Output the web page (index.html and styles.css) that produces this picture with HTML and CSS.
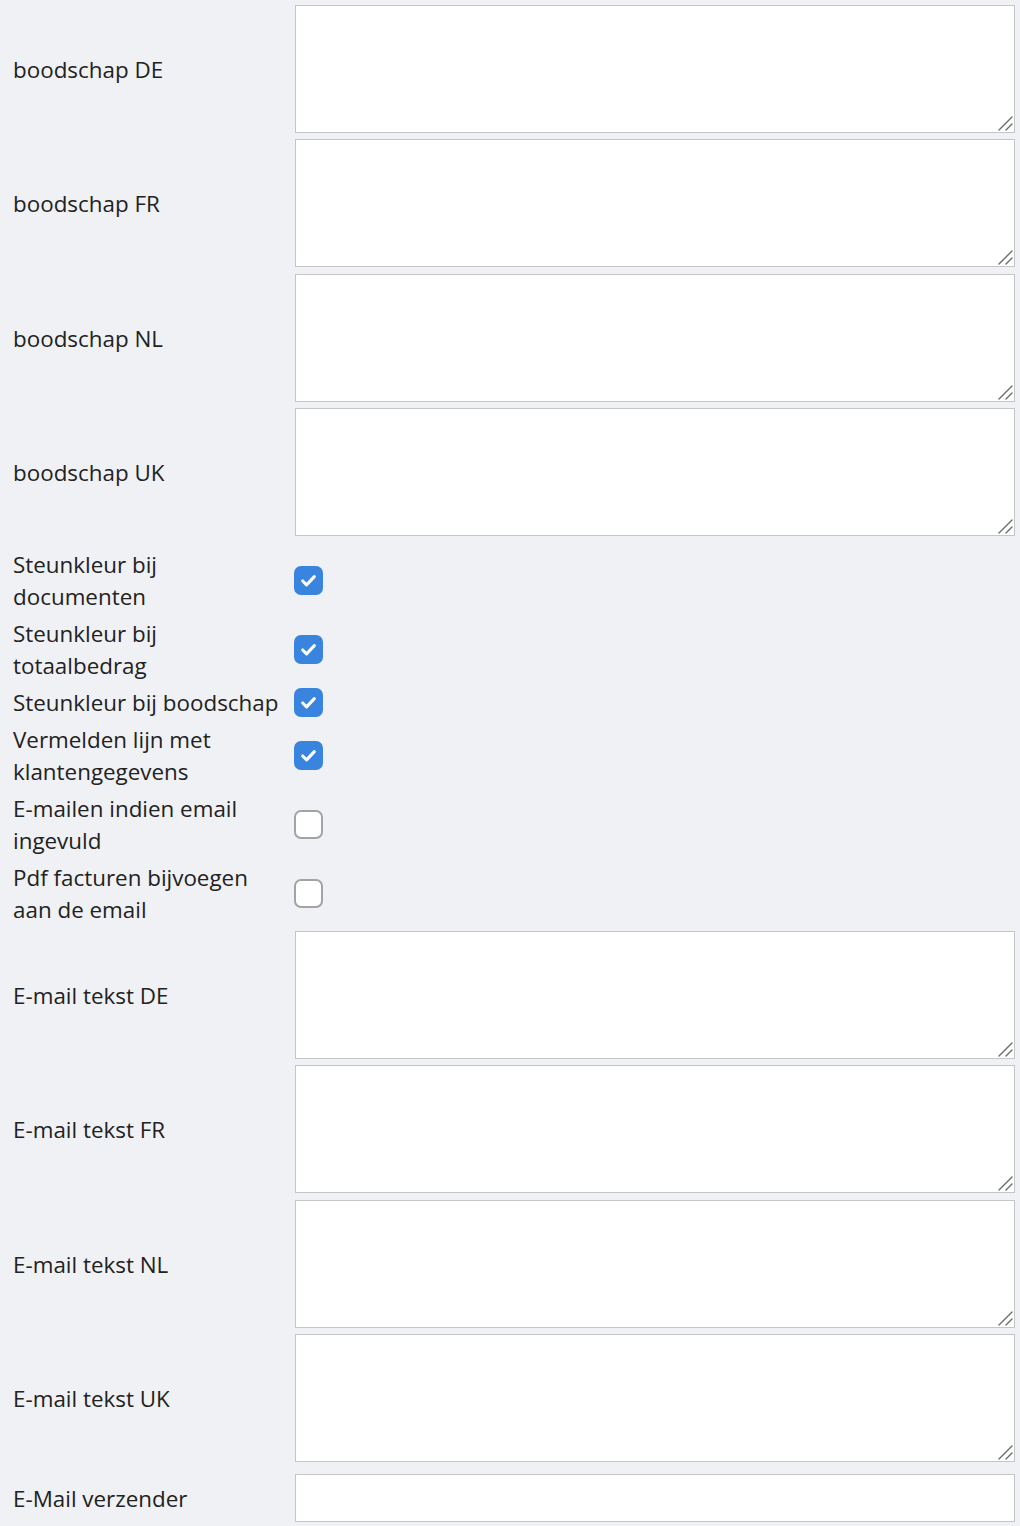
FILE: index.html
```html
<!DOCTYPE html>
<html lang="nl">
<head>
<meta charset="utf-8">
<title>Instellingen</title>
<link rel="stylesheet" href="styles.css">
</head>
<body>
<form class="form">
  <div class="row row-text"><label class="lbl">boodschap DE</label><span class="tw"><textarea class="ta"></textarea><svg class="grip" viewBox="0 0 16 16"><path d="M2 15L15 2M9 15L15 9"/></svg></span></div>
  <div class="row row-text"><label class="lbl">boodschap FR</label><span class="tw"><textarea class="ta"></textarea><svg class="grip" viewBox="0 0 16 16"><path d="M2 15L15 2M9 15L15 9"/></svg></span></div>
  <div class="row row-text"><label class="lbl">boodschap NL</label><span class="tw"><textarea class="ta"></textarea><svg class="grip" viewBox="0 0 16 16"><path d="M2 15L15 2M9 15L15 9"/></svg></span></div>
  <div class="row row-text row-last"><label class="lbl">boodschap UK</label><span class="tw"><textarea class="ta"></textarea><svg class="grip" viewBox="0 0 16 16"><path d="M2 15L15 2M9 15L15 9"/></svg></span></div>

  <div class="row row-check"><label class="lbl">Steunkleur bij documenten</label><span class="cb on"><svg viewBox="0 0 30 30"><path d="M9 15.5l4 4 8-8.5"/></svg></span></div>
  <div class="row row-check"><label class="lbl">Steunkleur bij totaalbedrag</label><span class="cb on"><svg viewBox="0 0 30 30"><path d="M9 15.5l4 4 8-8.5"/></svg></span></div>
  <div class="row row-check"><label class="lbl">Steunkleur bij boodschap</label><span class="cb on"><svg viewBox="0 0 30 30"><path d="M9 15.5l4 4 8-8.5"/></svg></span></div>
  <div class="row row-check"><label class="lbl">Vermelden lijn met klantengegevens</label><span class="cb on"><svg viewBox="0 0 30 30"><path d="M9 15.5l4 4 8-8.5"/></svg></span></div>
  <div class="row row-check"><label class="lbl">E-mailen indien email ingevuld</label><span class="cb"></span></div>
  <div class="row row-check"><label class="lbl">Pdf facturen bijvoegen aan de email</label><span class="cb"></span></div>

  <div class="row row-text"><label class="lbl">E-mail tekst DE</label><span class="tw"><textarea class="ta"></textarea><svg class="grip" viewBox="0 0 16 16"><path d="M2 15L15 2M9 15L15 9"/></svg></span></div>
  <div class="row row-text"><label class="lbl">E-mail tekst FR</label><span class="tw"><textarea class="ta"></textarea><svg class="grip" viewBox="0 0 16 16"><path d="M2 15L15 2M9 15L15 9"/></svg></span></div>
  <div class="row row-text"><label class="lbl">E-mail tekst NL</label><span class="tw"><textarea class="ta"></textarea><svg class="grip" viewBox="0 0 16 16"><path d="M2 15L15 2M9 15L15 9"/></svg></span></div>
  <div class="row row-text row-end"><label class="lbl">E-mail tekst UK</label><span class="tw"><textarea class="ta"></textarea><svg class="grip" viewBox="0 0 16 16"><path d="M2 15L15 2M9 15L15 9"/></svg></span></div>

  <div class="row row-input"><label class="lbl">E-Mail verzender</label><input class="inp" type="text"></div>
</form>
</body>
</html>
```
FILE: styles.css
```css
html, body {
  margin: 0;
  padding: 0;
  background: #f0f1f5;
}
body {
  font-family: "Open Sans", "Noto Sans", sans-serif;
  font-size: 22.4px;
  line-height: 32px;
  color: #222;
}
.form {
  display: flex;
  flex-direction: column;
  padding: 5px 5px 0 13px;
}
.row {
  display: flex;
  align-items: center;
  gap: 12px;
}
.lbl {
  width: 270px;
  flex: none;
  padding-top: 2px;
}
.row-check .lbl {
  padding-top: 0;
}
.row-text {
  margin-bottom: 6.33px;
}
.row-text.row-last {
  margin-bottom: 13px;
}
.row-text.row-end {
  margin-bottom: 12px;
}
.row-check {
  margin-bottom: 5px;
  min-height: 32px;
}
.tw {
  flex: 1;
  position: relative;
  display: block;
}
.ta {
  display: block;
  width: 100%;
  height: 128px;
  box-sizing: border-box;
  margin: 0;
  border: 1px solid #c4c5c8;
  border-radius: 0;
  background: #fff;
  padding: 6px 8px;
  font: inherit;
  resize: none;
}
.grip {
  position: absolute;
  right: 2px;
  bottom: 2px;
  width: 16px;
  height: 16px;
}
.grip path {
  fill: none;
  stroke: #6b6b6b;
  stroke-width: 1.4;
  stroke-linecap: round;
}
.inp {
  flex: 1;
  display: block;
  height: 48px;
  box-sizing: border-box;
  margin: 0;
  border: 1px solid #c4c5c8;
  border-radius: 0;
  background: #fff;
  padding: 6px 8px;
  font: inherit;
}
.cb {
  width: 29px;
  height: 29px;
  box-sizing: border-box;
  border: 2px solid #a2a3a6;
  border-radius: 7px;
  background: #fff;
  margin-left: -1px;
  display: flex;
  align-items: center;
  justify-content: center;
}
.cb.on {
  background: #3884df;
  border-color: #3884df;
}
.cb svg {
  width: 29px;
  height: 29px;
  flex: none;
}
.cb path {
  fill: none;
  stroke: #fff;
  stroke-width: 3.2;
  stroke-linecap: round;
  stroke-linejoin: round;
}
```
